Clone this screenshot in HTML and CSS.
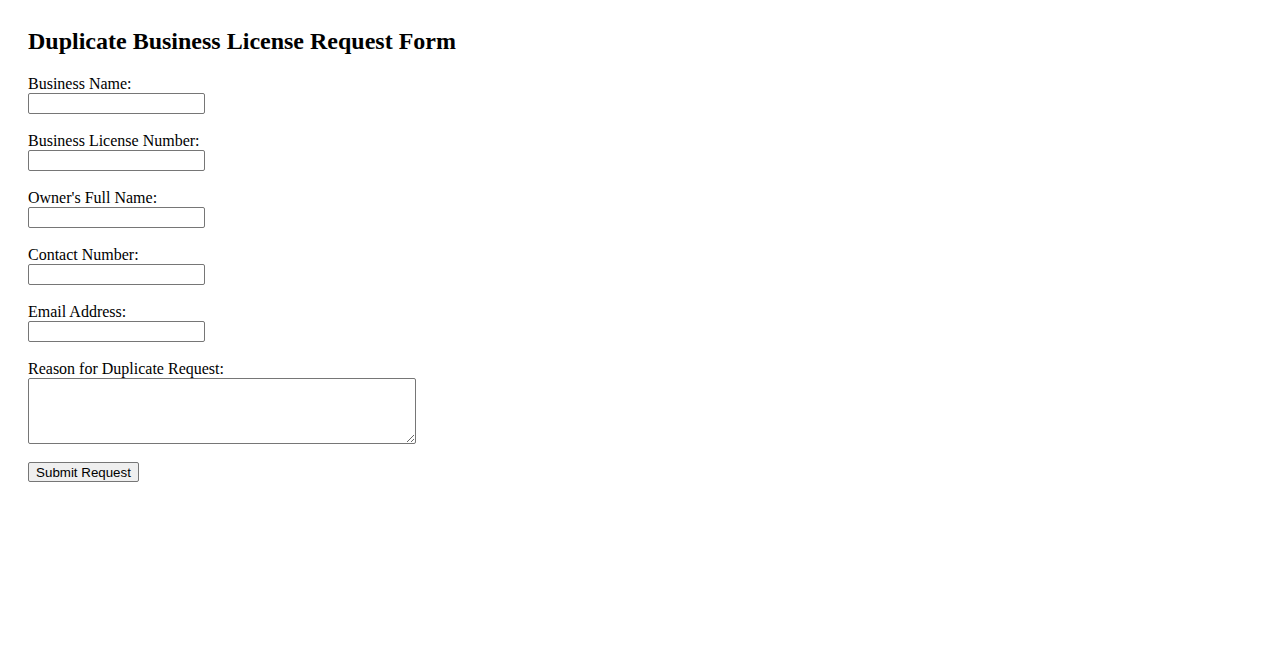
FILE: index.html
```html
<!DOCTYPE html>
<html lang="en">
<head>
<meta charset="utf-8">
<title>Duplicate Business License Request Form</title>
<link rel="stylesheet" href="styles.css">
</head>
<body>
<h2 class="title">Duplicate Business License Request Form</h2>
<form class="form">
  <div class="field">
    <label class="label" for="bname">Business Name:</label>
    <input class="input" type="text" id="bname">
  </div>
  <div class="field">
    <label class="label" for="blic">Business License Number:</label>
    <input class="input" type="text" id="blic">
  </div>
  <div class="field">
    <label class="label" for="owner">Owner's Full Name:</label>
    <input class="input" type="text" id="owner">
  </div>
  <div class="field">
    <label class="label" for="phone">Contact Number:</label>
    <input class="input" type="text" id="phone">
  </div>
  <div class="field">
    <label class="label" for="email">Email Address:</label>
    <input class="input" type="text" id="email">
  </div>
  <div class="field">
    <label class="label" for="reason">Reason for Duplicate Request:</label>
    <textarea class="textarea" id="reason"></textarea>
  </div>
  <button class="submit" type="button">Submit Request</button>
</form>
</body>
</html>
```
FILE: styles.css
```css
html, body {
  background: #ffffff;
}
body {
  margin: 0;
  padding: 27px 28px;
  font-family: "Liberation Serif", "Times New Roman", serif;
  font-size: 16px;
  color: #000000;
}
.title {
  margin: 1px 0 20px 0;
  font-size: 24px;
  line-height: 27px;
  font-weight: bold;
}
.form {
  display: flex;
  flex-direction: column;
  align-items: flex-start;
}
.field {
  display: flex;
  flex-direction: column;
  align-items: flex-start;
  margin-bottom: 18px;
}
.label {
  display: block;
  line-height: 18px;
  height: 18px;
}
.input {
  box-sizing: border-box;
  width: 177px;
  height: 21px;
  margin: 0;
  padding: 1px 2px;
  border: 1px solid #767676;
  border-radius: 2px;
  background: #ffffff;
  font-family: "Liberation Sans", Arial, sans-serif;
  font-size: 13.33px;
}
.textarea {
  box-sizing: border-box;
  width: 388px;
  height: 66px;
  margin: 0;
  padding: 2px;
  border: 1px solid #767676;
  border-radius: 2px;
  background: #ffffff;
  font-family: "Liberation Mono", monospace;
  font-size: 13.33px;
  display: block;
}
.submit {
  box-sizing: border-box;
  height: 20px;
  width: 111px;
  margin: 0;
  padding: 2px 6px 0 6px;
  border: 1px solid #767676;
  border-radius: 2px;
  background: #efefef;
  color: #000000;
  font-family: "Liberation Sans", Arial, sans-serif;
  font-size: 13.33px;
  line-height: 16px;
}
```
